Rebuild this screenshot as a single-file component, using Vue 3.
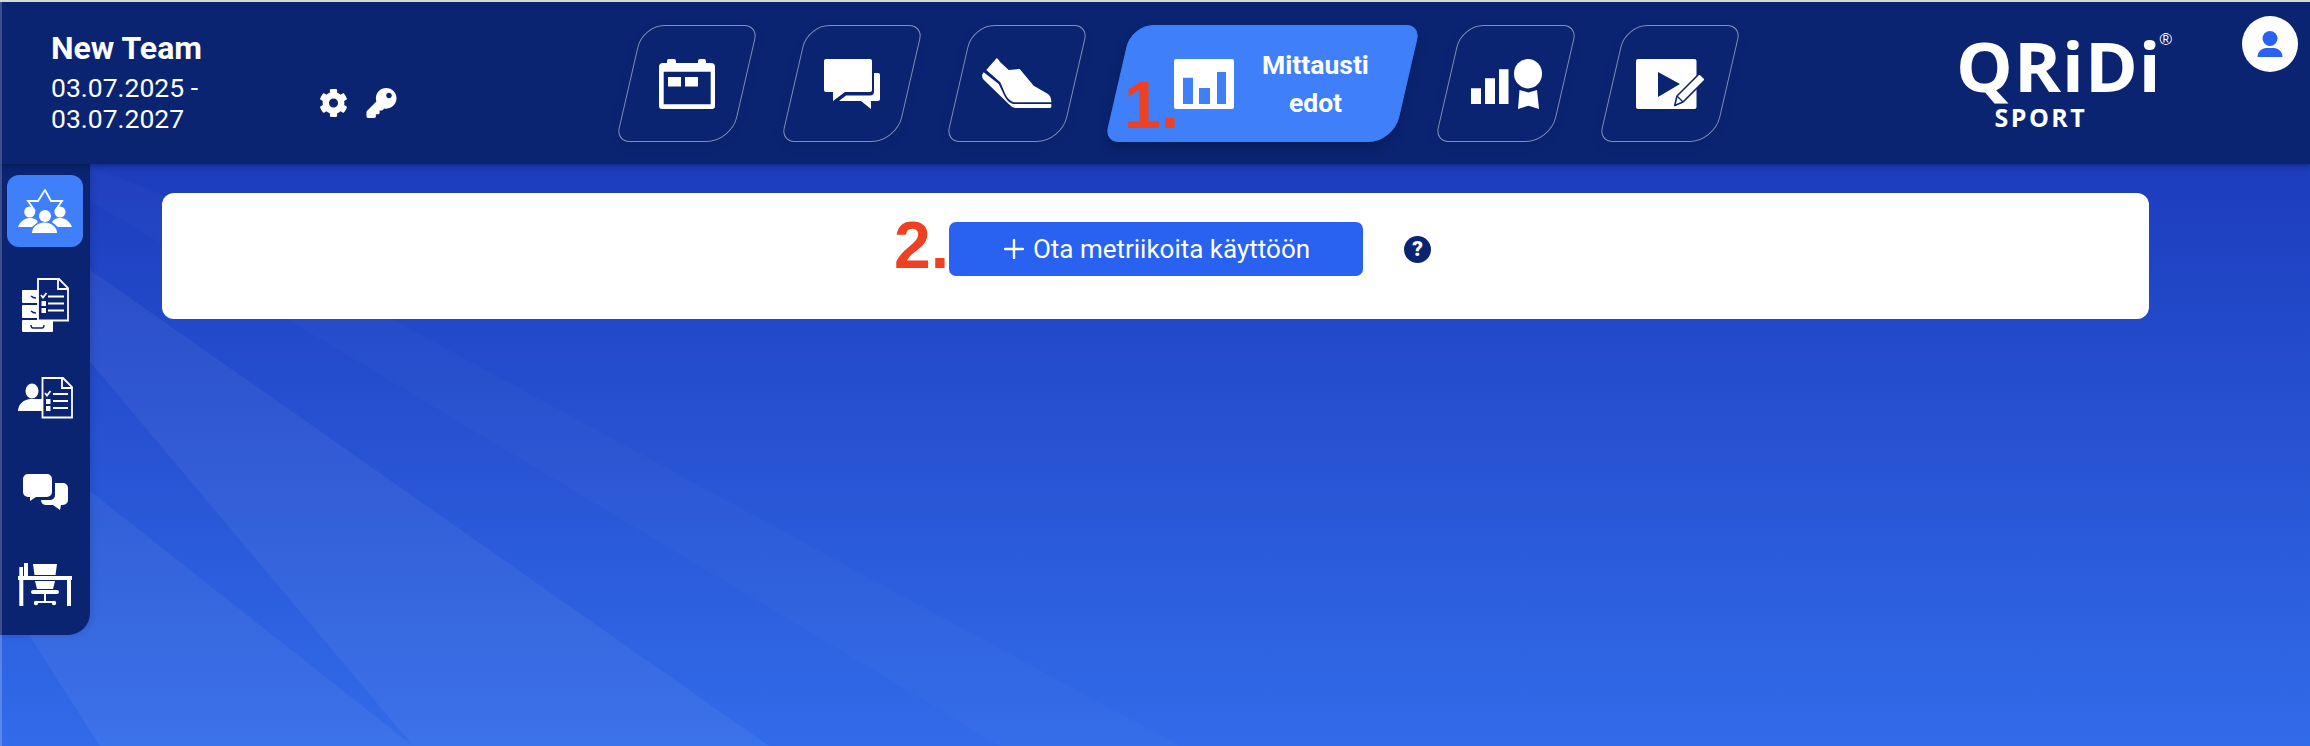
<template>
  <div class="page">
    <svg class="rays" viewBox="0 0 2310 746" aria-hidden="true">
      <polygon points="-98,138 769,746 413,746" fill="rgba(255,255,255,0.05)" />
      <polygon points="0,420 413,746 100,746 0,590" fill="rgba(255,255,255,0.05)" />
      <polygon points="90,166 161,194 1180,746 1000,746 90,201" fill="rgba(255,255,255,0.018)" />
    </svg>

    <header class="topbar">
      <div class="team">
        <div class="team-name">New Team</div>
        <div class="team-dates">03.07.2025 - 03.07.2027</div>
      </div>

      <div class="tools">
        <svg class="tool-gear" viewBox="0 0 512 512"><path fill="currentColor" d="M487.4 315.7l-42.6-24.6c4.3-23.2 4.3-47 0-70.2l42.6-24.6c4.9-2.8 7.1-8.6 5.5-14-11.1-35.6-30-67.8-54.7-94.6-3.8-4.1-10-5.1-14.8-2.3L380.8 110c-17.9-15.4-38.5-27.3-60.8-35.1V25.8c0-5.6-3.9-10.5-9.4-11.7-36.7-8.2-74.3-7.8-109.2 0-5.5 1.2-9.4 6.1-9.4 11.7V75c-22.2 7.9-42.8 19.8-60.8 35.1L88.7 85.5c-4.9-2.8-11-1.9-14.8 2.3-24.7 26.7-43.6 58.9-54.7 94.6-1.7 5.4.6 11.2 5.5 14L67.3 221c-4.3 23.2-4.3 47 0 70.2l-42.6 24.6c-4.9 2.8-7.1 8.6-5.5 14 11.1 35.6 30 67.8 54.7 94.6 3.8 4.1 10 5.1 14.8 2.3l42.6-24.6c17.9 15.4 38.5 27.3 60.8 35.1v49.2c0 5.6 3.9 10.5 9.4 11.7 36.7 8.2 74.3 7.8 109.2 0 5.5-1.2 9.4-6.1 9.4-11.7v-49.2c22.2-7.9 42.8-19.8 60.8-35.1l42.6 24.6c4.9 2.8 11 1.9 14.8-2.3 24.7-26.7 43.6-58.9 54.7-94.6 1.5-5.5-.7-11.3-5.6-14.1zM256 336c-44.1 0-80-35.9-80-80s35.9-80 80-80 80 35.9 80 80-35.9 80-80 80z" /></svg>
        <svg class="tool-key" viewBox="0 0 512 512"><path fill="currentColor" d="M512 176.001C512 273.203 433.202 352 336 352c-11.22 0-22.19-1.062-32.827-3.069l-24.012 27.014A23.999 23.999 0 0 1 261.223 384H224v40c0 13.255-10.745 24-24 24h-40v40c0 13.255-10.745 24-24 24H24c-13.255 0-24-10.745-24-24v-78.059c0-6.365 2.529-12.47 7.029-16.971l161.802-161.802C163.108 213.814 160 195.271 160 176 160 78.798 238.797.001 335.999 0 433.488-.001 512 78.511 512 176.001zM336 128c0 26.51 21.49 48 48 48s48-21.49 48-48-21.49-48-48-48-48 21.49-48 48z" /></svg>
      </div>

      <nav class="nav">
        <div class="tab">
          <div class="tab-inner">
            <svg width="56" height="50" viewBox="0 0 56 50"><path fill="currentColor" fill-rule="evenodd" d="M8 4V2a2 2 0 0 1 2-2h5a2 2 0 0 1 2 2v2h22V2a2 2 0 0 1 2-2h4a2 2 0 0 1 2 2v2h5a4 4 0 0 1 4 4v39a3 3 0 0 1-3 3H3a3 3 0 0 1-3-3V8a4 4 0 0 1 4-4zM4.700 12.700V45.300H51.700V12.700zM9 18H22V27.500H9zM26 18H39V27.500H26z" /></svg>
          </div>
        </div>
        <div class="tab">
          <div class="tab-inner">
            <svg width="56" height="50" viewBox="0 0 56 50"><path fill="currentColor" d="M2 0H46a2 2 0 0 1 2 2V31a2 2 0 0 1-2 2H21L9 42V33H2a2 2 0 0 1-2-2V2a2 2 0 0 1 2-2z" /><path fill="currentColor" d="M50 14H54a2 2 0 0 1 2 2V40a2 2 0 0 1-2 2H47V50L37 42H15L22 36.500H46a4 4 0 0 0 4-4z" /></svg>
          </div>
        </div>
        <div class="tab">
          <div class="tab-inner">
            <svg width="70" height="51" viewBox="0 0 70 51"><path fill="currentColor" d="M4.300 12L14.300 .5Q15 0 16 1L18.300 4.300L26.700 12L37.700 11L51.700 27.700L66 36Q69.300 38.500 69.300 44.300H31.700Q26 42 23.300 36L18.300 24.300z" /><path fill="currentColor" d="M0 17L1.700 14.300L16.700 26L22 37Q25 44 31 46H69.300V49Q69 50 68 50H33.300Q29 49 26.700 46L1.700 21.700Q0 20 0 17z" /></svg>
          </div>
        </div>
        <div class="tab tab-active">
          <div class="tab-inner">
            <svg width="60" height="50" viewBox="0 0 60 50"><path fill="currentColor" fill-rule="evenodd" d="M2 0H58a2 2 0 0 1 2 2V48a2 2 0 0 1-2 2H2a2 2 0 0 1-2-2V2a2 2 0 0 1 2-2zM9 18.700V45H19V18.700zM25 29V45H36V29zM43 13V45H52V13z" /></svg>
            <span class="tab-label">Mittausti<br />edot</span>
          </div>
        </div>
        <div class="tab">
          <div class="tab-inner">
            <svg width="71" height="50" viewBox="0 0 71 50"><path fill="currentColor" d="M0 29.300H10V45H0zM14 19.300H24V45H14zM28 10.300H37.500V45H28z" /><ellipse fill="currentColor" cx="57" cy="14.700" rx="14" ry="14.700" /><path fill="currentColor" d="M48.500 31L57.500 33.500L66 31L68 50L57.500 46.700L47 50z" /></svg>
          </div>
        </div>
        <div class="tab">
          <div class="tab-inner">
            <svg width="69" height="50" viewBox="0 0 69 50"><path fill="currentColor" fill-rule="evenodd" d="M2 0H58.500a2 2 0 0 1 2 2V48a2 2 0 0 1-2 2H2a2 2 0 0 1-2-2V2a2 2 0 0 1 2-2zM22 13V38L44 25z" /><path fill="currentColor" stroke="#0a2472" stroke-width="1.600" stroke-linejoin="round" d="M38.700 46.500L41 37L62.500 15.500Q63.500 14.700 64.500 15.500L68.500 19.500Q69.300 20.500 68.500 21.500L47 43z" /><path fill="none" stroke="#0a2472" stroke-width="1.200" d="M41 37L47 43" /></svg>
          </div>
        </div>
        <span class="step step-one">1.</span>
      </nav>

      <div class="logo">
        <div class="logo-name">QRiDi</div>
        <span class="logo-reg">®</span>
        <div class="logo-sub">SPORT</div>
      </div>

      <div class="avatar">
        <svg width="26" height="26" viewBox="0 0 26 26"><circle cx="13" cy="7.500" r="7.500" fill="currentColor" /><path fill="currentColor" d="M.5 26C.5 20.500 5 17 9 17H17C21 17 25.500 20.500 25.500 26z" /></svg>
      </div>
    </header>

    <div class="body">
      <aside class="sidebar">
        <div class="side-item side-active">
          <svg width="54" height="45" viewBox="0 0 54 45">
            <path fill="none" stroke="currentColor" stroke-width="1.800" d="M17 22L10 12H20L27 1L33 12H44L37 22" />
            <circle cx="11.700" cy="23" r="5.500" fill="currentColor" />
            <circle cx="42" cy="23" r="5.500" fill="currentColor" />
            <path fill="currentColor" d="M0 38C2 33 6 29 12 29C16 29 18 30 20 33L14 38zM54 38C52 33 48 29 42 29C38 29 36 30 34 33L40 38z" />
            <circle cx="27" cy="27" r="6" fill="currentColor" />
            <path fill="currentColor" d="M14 44C14 38 20 33.500 26.500 33.500S39 38 39 44z" />
          </svg>
        </div>
        <div class="side-item">
          <svg width="47" height="54" viewBox="0 0 47 54">
            <path fill="currentColor" d="M1 12H31V25H1a1 1 0 0 1-1-1V13a1 1 0 0 1 1-1zM1 27H31V40H1a1 1 0 0 1-1-1V28a1 1 0 0 1 1-1zM1 42H30a1 1 0 0 1 1 1V53a1 1 0 0 1-1 1H1a1 1 0 0 1-1-1V43a1 1 0 0 1 1-1z" />
            <path fill="none" stroke="#0a2472" stroke-width="1.400" d="M9 18Q11 20 14 20M9 33Q11 35 14 35M9 47Q9 50 11 50H20Q22 50 22 47" />
            <path fill="#0a2472" stroke="currentColor" stroke-width="1.800" d="M16 1H37L46 10V42.500H16z" />
            <path fill="none" stroke="currentColor" stroke-width="1.800" d="M36 1V11H46" />
            <path fill="none" stroke="currentColor" stroke-width="1.800" d="M19 17L21 19.500L24.500 15M26 18.500H42M26 25.500H42M26 32.500H42" />
            <path fill="currentColor" d="M19.500 23H24V28H19.500zM19.500 30H24V35H19.500z" />
          </svg>
        </div>
        <div class="side-item">
          <svg width="55" height="42" viewBox="0 0 55 42">
            <ellipse cx="14" cy="14" rx="6.500" ry="7.500" fill="currentColor" />
            <path fill="currentColor" d="M0 34C0 27 6 22 13 22H25V34z" />
            <path fill="#0a2472" stroke="currentColor" stroke-width="1.800" d="M24.500 1H45L54 10V40.500H24.500z" />
            <path fill="none" stroke="currentColor" stroke-width="1.800" d="M44 1V11H54" />
            <path fill="none" stroke="currentColor" stroke-width="1.800" d="M27 16L29 18.500L32.500 14M35 17H50M35 24H50M35 31H50" />
            <path fill="currentColor" d="M28 22H32.500V27H28zM28 29H32.500V34H28z" />
          </svg>
        </div>
        <div class="side-item">
          <svg width="45" height="36" viewBox="0 0 45 36">
            <path fill="currentColor" d="M5 0H24a5 5 0 0 1 5 5V18a5 5 0 0 1-5 5H13L7 27V23H5a5 5 0 0 1-5-5V5a5 5 0 0 1 5-5z" />
            <path fill="currentColor" d="M32 9H40a5 5 0 0 1 5 5V26a5 5 0 0 1-5 5H38L37 36L30 31H22Q18 30 18 26H28Q32 25 32 21z" />
          </svg>
        </div>
        <div class="side-item">
          <svg width="54" height="44" viewBox="0 0 54 44">
            <path fill="currentColor" d="M1.300 4H5V13H1.300zM6 0H10V13H6zM15 1H39L37.500 12H16.500z" />
            <path fill="currentColor" d="M0 13H54V17H0zM1.300 17H5.300V43H1.300zM49 17H53V43H49z" />
            <path fill="currentColor" d="M17 18H37L35 26H19zM15 27H39a2 2 0 0 1 0 4H15a2 2 0 0 1 0-4zM26 31H28V38H35V40H19V38H26z" />
            <circle cx="18" cy="40" r="2.200" fill="currentColor" />
            <circle cx="36" cy="40" r="2.200" fill="currentColor" />
          </svg>
        </div>
      </aside>

      <main class="main">
        <section class="card">
          <div class="card-row">
            <span class="step step-two">2.</span>
            <button class="enable-btn" type="button">
              <svg width="20" height="20" viewBox="0 0 20 20"><path fill="none" stroke="currentColor" stroke-width="2.400" stroke-linecap="round" d="M10 1V19M1 10H19" /></svg>
              Ota metriikoita käyttöön
            </button>
            <span class="help">?</span>
          </div>
        </section>
      </main>
    </div>
  </div>
</template>

<script setup>
</script>

<style>
body { margin: 0 }
</style>

<style scoped>
.page {
  position: relative;
  width: 2310px;
  height: 746px;
  overflow: hidden;
  box-sizing: border-box;
  border-top: 2px solid #d9d9d9;
  background: linear-gradient(180deg, #1c3cbd 162px, #326be9 100%);
  font-family: Roboto, "Liberation Sans", sans-serif;
  color: #fff;
}
.page::after {
  content: "";
  position: absolute;
  left: 0;
  top: 0;
  bottom: 0;
  width: 2px;
  background: rgba(255, 255, 255, 0.2);
  z-index: 5;
}
.rays { position: absolute; left: 0; top: -2px; width: 2310px; height: 746px }

.topbar {
  position: relative;
  z-index: 2;
  display: flex;
  align-items: flex-start;
  height: 162px;
  background: #0a2472;
  box-shadow: 0 2px 5px rgba(0, 0, 0, 0.3);
}
.team { flex: none; width: 160px; margin: 28px 0 0 51px }
.team-name { font-size: 32px; font-weight: 700; line-height: 36px }
.team-dates { margin-top: 7px; font-size: 26.5px; line-height: 30.5px }

.tools { flex: none; display: flex; gap: 18px; margin: 86px 0 0 108px }
.tool-gear { width: 29px; height: 30px }
.tool-key { width: 31px; height: 30px }

.nav { position: relative; flex: none; display: flex; margin: 23px 0 0 221px; padding: 0 13.5px 0 10.5px }
.tab {
  flex: none;
  width: 116px;
  height: 117px;
  box-sizing: border-box;
  margin-right: 49px;
  border: 1px solid rgba(255, 255, 255, 0.48);
  border-radius: 22px 14px 25px 14px;
  transform: skewX(-13deg);
  box-shadow: 0 4px 10px rgba(0, 0, 0, 0.08);
}
.tab:nth-child(3) { margin-right: 43.5px }
.tab:nth-child(4) { margin-right: 41px }
.tab:nth-child(5) { margin-right: 48px }
.tab:nth-child(6) { margin-right: 0 }
.tab-inner {
  display: flex;
  align-items: center;
  justify-content: center;
  height: 100%;
  transform: skewX(13deg);
}
.tab-active {
  width: 289px;
  background: #3f80fa;
  border-color: #3f80fa;
  box-shadow: 0 6px 12px rgba(0, 0, 0, 0.2);
}
.tab-active .tab-inner { gap: 26px; padding-left: 20px; box-sizing: border-box }
.tab-label {
  width: 112px;
  text-align: center;
  font-size: 26.5px;
  font-weight: 700;
  line-height: 38px;
}

.step {
  position: absolute;
  font-family: "Liberation Sans", Arial, sans-serif;
  font-size: 66px;
  font-weight: 700;
  line-height: 1;
  color: #ee4023;
}
.step-one { left: 506px; top: 47px }
.step-two { right: 100%; top: -10px }

.logo { position: relative; flex: none; margin: 26px 0 0 214px; width: 210px }
.logo-name {
  font-family: "Open Sans", sans-serif;
  font-size: 68px;
  font-weight: 700;
  line-height: 76px;
  letter-spacing: 1px;
  transform: scaleX(1.05);
  transform-origin: left center;
}
.logo-reg {
  position: absolute;
  left: 204px;
  top: 2px;
  font-family: "Liberation Sans", sans-serif;
  font-size: 17px;
  line-height: 20px;
}
.logo-sub {
  margin: 0 0 0 39px;
  font-family: "Open Sans", sans-serif;
  font-size: 25px;
  font-weight: 700;
  line-height: 26px;
  letter-spacing: 2.500px;
}

.avatar {
  flex: none;
  display: flex;
  align-items: center;
  justify-content: center;
  width: 56px;
  height: 56px;
  margin: 14px 12px 0 auto;
  border-radius: 50%;
  background: #fff;
  color: #2962f0;
}

.body { position: relative; display: flex; align-items: flex-start }
.sidebar {
  display: flex;
  flex-direction: column;
  gap: 21.5px;
  flex: none;
  box-sizing: border-box;
  width: 90px;
  height: 471px;
  padding: 11px 7px;
  background: #0a2472;
  border-bottom-right-radius: 22px;
  box-shadow: 2px 0 6px rgba(0, 0, 0, 0.12);
}
.side-item {
  display: flex;
  align-items: center;
  justify-content: center;
  flex: none;
  height: 72px;
  border-radius: 12px;
}
.side-active { background: #3f80fa }

.main { padding: 29px 0 0 72px }
.card {
  width: 1987px;
  height: 126px;
  box-sizing: border-box;
  padding: 29px 0 0 787px;
  background: #fff;
  border-radius: 12px;
}
.card-row { position: relative; display: flex; align-items: center; gap: 41px }
.enable-btn {
  display: flex;
  align-items: center;
  justify-content: center;
  gap: 9px;
  width: 414px;
  height: 54px;
  padding: 0 0 0 2px;
  border: none;
  border-radius: 7px;
  background: #2962f0;
  color: #fff;
  font-family: Roboto, "Liberation Sans", sans-serif;
  font-size: 26px;
}
.help {
  display: flex;
  align-items: center;
  justify-content: center;
  width: 27px;
  height: 27px;
  border-radius: 50%;
  background: #0a2472;
  color: #fff;
  font-size: 21px;
  font-weight: 900;
}
</style>
